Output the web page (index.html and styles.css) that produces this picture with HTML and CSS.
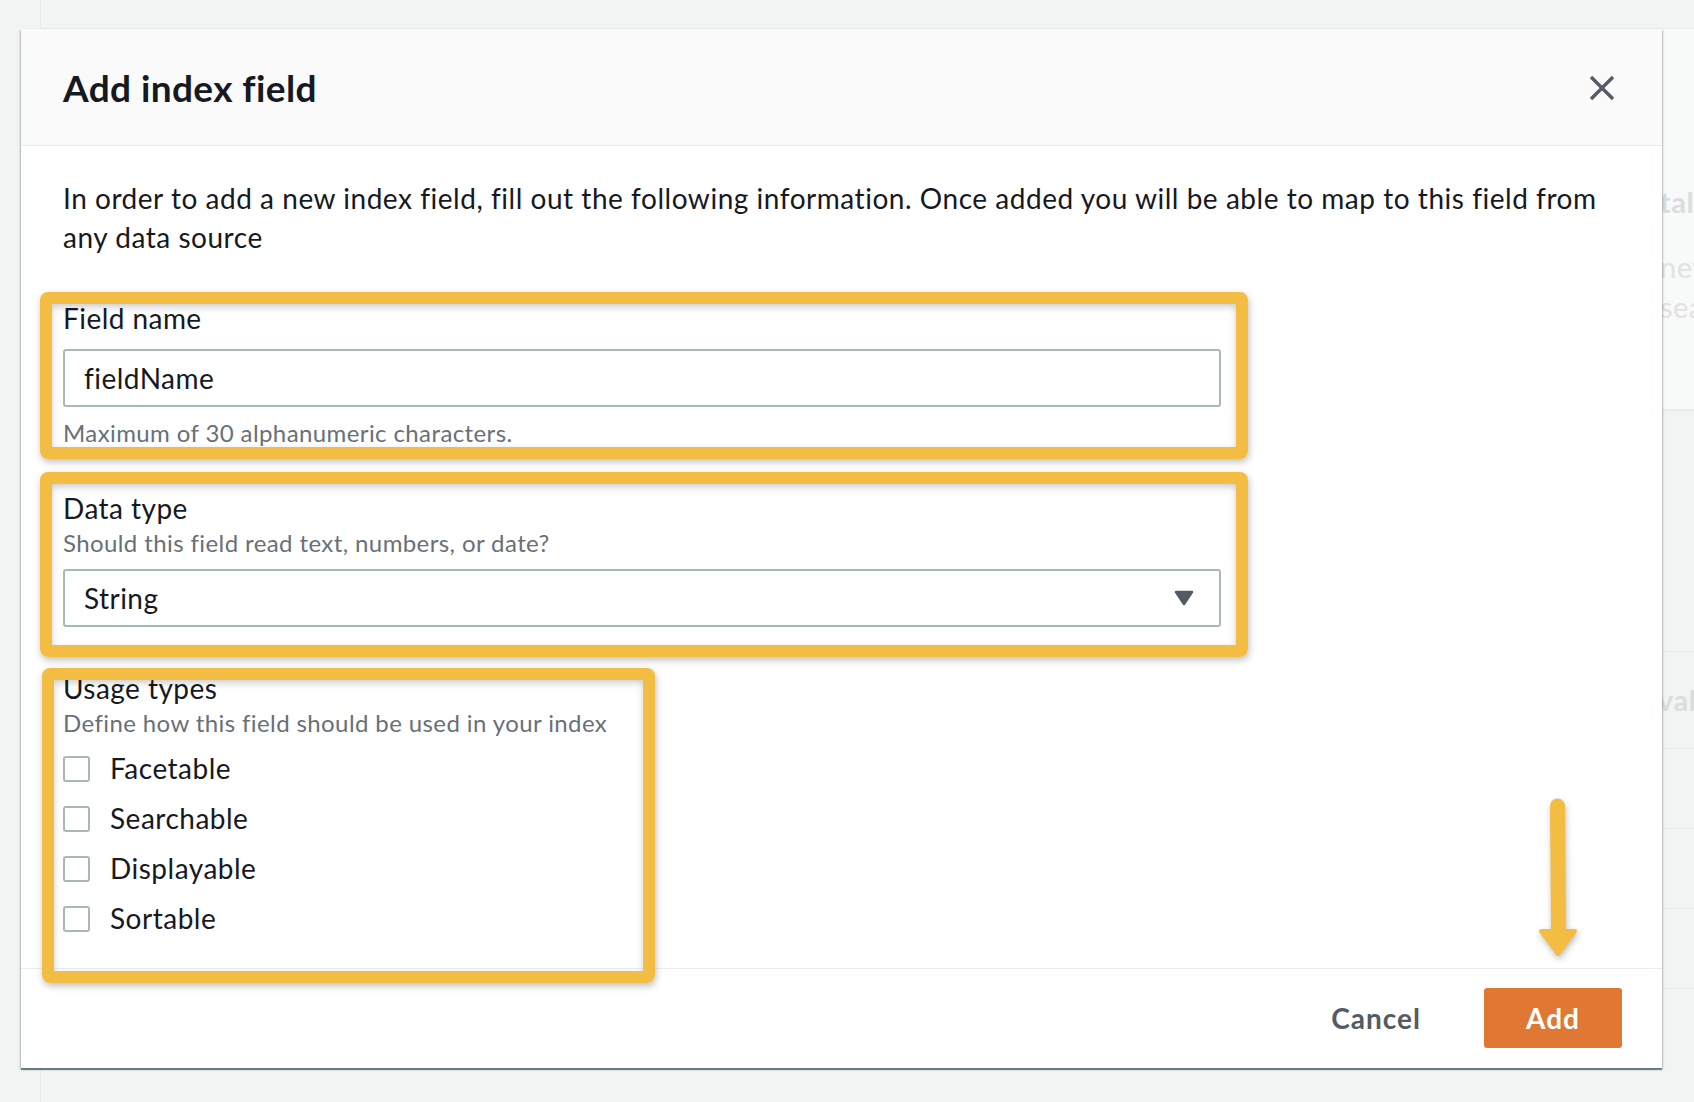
FILE: index.html
```html
<!DOCTYPE html>
<html lang="en">
<head>
<meta charset="utf-8">
<title>Add index field</title>
<link rel="stylesheet" href="styles.css">
</head>
<body>
<div class="page">
  <aside class="side"></aside>
  <main class="main">
    <div class="topbar"></div>
    <section class="bg-panel">
      <p class="bg-head">tally</p>
      <p class="bg-text bg-text-first">new</p>
      <p class="bg-text">search</p>
    </section>
    <section class="bg-rows">
      <div class="bg-row bg-row-first"><span class="bg-head">vable</span></div>
      <div class="bg-row"></div>
      <div class="bg-row"></div>
      <div class="bg-row"></div>
      <div class="bg-row"></div>
    </section>
  </main>
</div>

<div class="modal">
  <header class="modal-head">
    <h2 class="modal-title">Add index field</h2>
    <button class="close" aria-label="Close">
      <svg width="26" height="26" viewBox="0 0 26 26"><path d="M2 2 L24 24 M24 2 L2 24" stroke="#545b64" stroke-width="3.4" fill="none"/></svg>
    </button>
  </header>
  <div class="modal-body">
    <p class="intro">In order to add a new index field, fill out the following information. Once added you will be able to map to this field from<br>any data source</p>
    <div class="group">
      <label class="label">Field name</label>
      <div class="input">fieldName</div>
      <p class="hint">Maximum of 30 alphanumeric characters.</p>
    </div>
    <div class="group">
      <label class="label">Data type</label>
      <p class="hint tight">Should this field read text, numbers, or date?</p>
      <div class="input select">
        <span>String</span>
        <svg class="caret" width="20" height="16" viewBox="0 0 20 16"><path d="M2 2 L18 2 L10 14 Z" fill="#545b64" stroke="#545b64" stroke-width="2.5" stroke-linejoin="round"/></svg>
      </div>
    </div>
    <div class="group">
      <span class="label">Usage types</span>
      <p class="hint tight">Define how this field should be used in your index</p>
      <ul class="checks">
        <li class="check"><span class="box"></span>Facetable</li>
        <li class="check"><span class="box"></span>Searchable</li>
        <li class="check"><span class="box"></span>Displayable</li>
        <li class="check"><span class="box"></span>Sortable</li>
      </ul>
    </div>
  </div>
  <footer class="modal-foot">
    <button class="btn-link">Cancel</button>
    <button class="btn-primary">Add</button>
  </footer>

  <div class="mark mark-name"></div>
  <div class="mark mark-type"></div>
  <div class="mark mark-usage"></div>
  <svg class="arrow" width="44" height="172" viewBox="0 0 44 172">
    <path d="M21.5 12 L22.5 138" stroke="#f2bd42" stroke-width="15" stroke-linecap="round" fill="none"/>
    <path d="M5 137 L39 137 L22 160 Z" fill="#f2bd42" stroke="#f2bd42" stroke-width="4" stroke-linejoin="round"/>
  </svg>
</div>
</body>
</html>
```

FILE: styles.css
```css
* { box-sizing: border-box; }

html, body {
  margin: 0;
  height: 100%;
}

body {
  background: #f2f3f3;
  font-family: Lato, "Open Sans", sans-serif;
  color: #16191f;
  overflow: hidden;
}

/* background page */
.page {
  display: grid;
  grid-template-columns: 41px 1fr;
  height: 1102px;
}

.side {
  border-right: 1px solid #e7eaea;
}

.main {
  display: flex;
  flex-direction: column;
}

.topbar {
  height: 29px;
  border-bottom: 1px solid #eceeee;
}

.bg-panel {
  background: #f8f9f9;
  border-bottom: 2px solid #e9ebeb;
  height: 382px;
  padding: 156px 0 0 1619px;
  white-space: nowrap;
}

.bg-panel p {
  margin: 0;
}

.bg-head {
  font-weight: 700;
  font-size: 29px;
  letter-spacing: 0.5px;
  line-height: 34px;
  color: #dadddd;
}

.bg-text {
  font-size: 29px;
  letter-spacing: 0.5px;
  line-height: 40px;
  color: #e0e2e3;
}

.bg-text-first {
  margin-top: 28px !important;
}

.bg-rows {
  display: flex;
  flex-direction: column;
  padding-top: 240px;
  padding-left: 1617px;
  white-space: nowrap;
}

.bg-row {
  height: 80px;
  border-top: 1px solid #e9ebeb;
  display: flex;
  align-items: center;
}

.bg-row-first {
  height: 97px;
}

/* modal */
.modal {
  position: absolute;
  left: 21px;
  top: 29px;
  width: 1641px;
  background: #fff;
  box-shadow: 0 2px 1px rgba(0, 28, 36, 0.45), 1px 1px 2px rgba(0, 28, 36, 0.2), -1px 1px 2px rgba(0, 28, 36, 0.2);
}

.modal-head {
  height: 117px;
  background: #fafafa;
  border-bottom: 1px solid #eaeded;
  display: flex;
  align-items: center;
  justify-content: space-between;
  padding: 2px 47px 0 42px;
}

.modal-title {
  margin: 0;
  font-size: 37px;
  letter-spacing: 0.4px;
  font-weight: 700;
  line-height: 44px;
  color: #16191f;
}

.close {
  border: 0;
  background: none;
  padding: 0;
  width: 26px;
  height: 26px;
  display: flex;
}

.modal-body {
  padding: 33px 42px 33px 42px;
}

.intro {
  margin: 0;
  font-size: 28px;
  letter-spacing: 0.53px;
  line-height: 39px;
}

.group {
  margin-top: 45px;
}

.group + .group {
  margin-top: 44px;
}

.group:last-child {
  margin-top: 45px;
}

.label {
  display: block;
  font-size: 28px;
  letter-spacing: 0.45px;
  line-height: 33px;
}

.input {
  margin-top: 14px;
  width: 1158px;
  height: 58px;
  border: 2px solid #aab7b8;
  border-radius: 3px;
  padding: 0 19px;
  display: flex;
  align-items: center;
  font-size: 28px;
  letter-spacing: 0.45px;
}

.hint {
  margin: 11px 0 0;
  font-size: 24px;
  letter-spacing: 0.4px;
  line-height: 30px;
  color: #687078;
}

.hint.tight {
  margin-top: 3px;
}

.select {
  margin-top: 11px;
  justify-content: space-between;
  padding-right: 25px;
}

.caret {
  display: block;
}

.checks {
  list-style: none;
  margin: 14px 0 0;
  padding: 0;
  display: flex;
  flex-direction: column;
  gap: 17px;
}

.check {
  display: flex;
  align-items: center;
  font-size: 28px;
  letter-spacing: 0.5px;
  line-height: 33px;
}

.box {
  width: 27px;
  height: 26px;
  border: 2px solid #aab7b8;
  border-radius: 3px;
  margin-right: 20px;
}

.modal-foot {
  height: 100px;
  border-top: 1px solid #eaeded;
  display: flex;
  justify-content: flex-end;
  align-items: flex-start;
  padding: 19px 40px 0 0;
}

.btn-link {
  border: 0;
  background: none;
  font-family: inherit;
  font-size: 28px;
  letter-spacing: 1px;
  font-weight: 700;
  color: #545b64;
  height: 60px;
  padding: 0 20px;
  margin-right: 43px;
}

.btn-primary {
  border: 0;
  border-radius: 3px;
  background: #e07833;
  color: #fff;
  font-family: inherit;
  font-size: 28px;
  letter-spacing: 1px;
  font-weight: 700;
  width: 138px;
  height: 60px;
}

/* annotation overlays */
.mark {
  position: absolute;
  border: 12px solid #f2bd42;
  border-radius: 8px;
  box-shadow: 1px 3px 7px rgba(0, 0, 0, 0.25), inset 0 3px 7px rgba(0, 0, 0, 0.2);
  pointer-events: none;
}

.mark-name {
  left: 19px;
  top: 263px;
  width: 1208px;
  height: 167px;
}

.mark-type {
  left: 19px;
  top: 443px;
  width: 1208px;
  height: 185px;
}

.mark-usage {
  left: 21px;
  top: 639px;
  width: 613px;
  height: 315px;
}

.arrow {
  position: absolute;
  left: 1515px;
  top: 765px;
  filter: drop-shadow(1px 3px 3px rgba(0, 0, 0, 0.25));
}
```
